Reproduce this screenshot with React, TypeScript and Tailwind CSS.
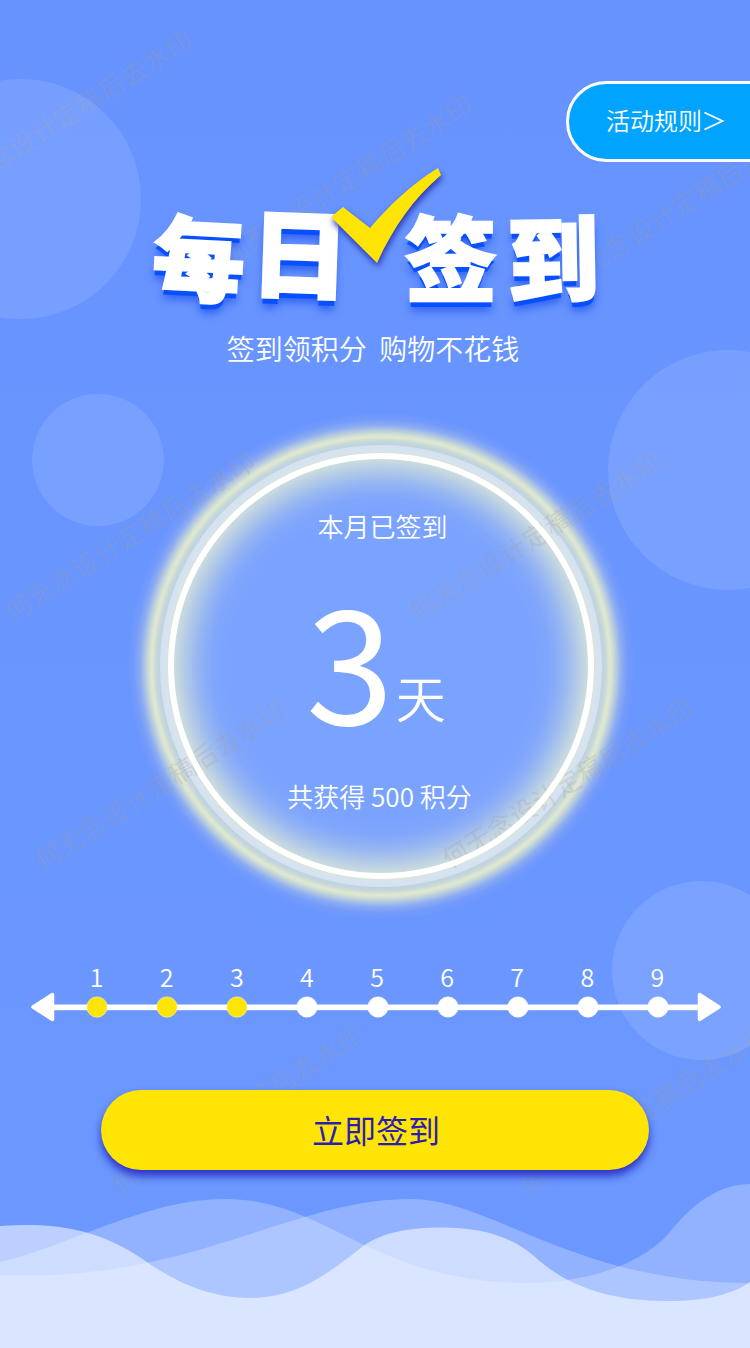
import React from 'react';

const DAYS = [
  { day: 1, x: 97 },
  { day: 2, x: 167 },
  { day: 3, x: 237 },
  { day: 4, x: 307 },
  { day: 5, x: 378 },
  { day: 6, x: 448 },
  { day: 7, x: 518 },
  { day: 8, x: 588 },
  { day: 9, x: 658 },
];
const SIGNED_DAYS = 3;

const BUBBLES = [
  'left-[-99px] top-[79px] size-[240px]',
  'left-[32px] top-[394px] size-[132px]',
  'left-[608px] top-[350px] size-[240px]',
  'left-[612px] top-[881px] size-[179px]',
];

// centre of the first character of every mark
const MARKS = [
  [-46, 185],
  [234, 250],
  [572, 273],
  [17, 606],
  [423, 606],
  [47, 855],
  [455, 853],
  [125, 1180],
  [532, 1180],
];

const TITLE = [
  { char: '每', className: 'w-[92px] rotate-3' },
  { char: '日', className: 'ml-[9px] w-[92px] -translate-y-[5px] rotate-2 scale-x-108 scale-y-104' },
  { char: '签', className: 'ml-[59px] w-[92px]' },
  { char: '到', className: 'ml-[10px] w-[92px] rotate-[-1deg]' },
];

const Watermarks: React.FC = () => (
  <div className="absolute inset-0 overflow-hidden">
    {MARKS.map(([x, y]) => (
      <span
        key={`${x}-${y}`}
        className="absolute h-[26px] origin-[13px_13px] rotate-[-32.4deg] whitespace-nowrap text-[26px] leading-[26px] tracking-[0.5px] text-[#a69c90]/25"
        style={{ left: x - 13, top: y - 13 }}
      >
        何无念设计定稿后去水印
      </span>
    ))}
  </div>
);

const Waves: React.FC = () => (
  <svg className="absolute bottom-0 left-0" width="750" height="168" viewBox="0 1180 750 168" fill="#fff">
    <path
      fillOpacity="0.26"
      d="M0 1262 C70 1246 145 1199 225 1199 C292 1199 332 1234 397 1259 C440 1276 485 1283 527 1283 C585 1283 642 1265 670 1232 C697 1198 724 1184 750 1184 V1348 H0Z"
    />
    <path
      fillOpacity="0.26"
      d="M0 1275 C190 1283 290 1199 411 1199 C491 1199 575 1283 750 1283 V1348 H0Z"
    />
    <path
      fillOpacity="0.55"
      d="M0 1226 C58 1222 102 1229 151 1265 C183 1286 215 1298 250 1298 C298 1298 330 1272 362 1247 C382 1232 410 1227.500 441 1227.500 C480 1227.500 512 1236 535 1257 C565 1284 605 1301 668 1301 C707 1301 733 1294 750 1282 V1348 H0Z"
    />
  </svg>
);

const Title: React.FC = () => (
  <h1 className="relative mt-[38px] ml-[153px] flex h-[108px] text-[92px] leading-[108px] font-black text-white [-webkit-text-stroke:2.500px_#fff] [text-shadow:0_6px_0_#0850ff,0_10px_8px_#2f62f0]">
    {TITLE.map(({ char, className }) => (
      <span key={char} className={className}>
        {char}
      </span>
    ))}
    <svg
      className="absolute left-[173px] top-[-37px] overflow-visible drop-shadow-[1px_4px_3px_#2b35b4]"
      width="120"
      height="104"
      viewBox="326 163 120 104"
    >
      <path fill="#ffe506" d="M331 217 L343 207 L370 228 C389 206 410 185 438 168 L441 175 C413 199 393 228 377 263Z" />
    </svg>
  </h1>
);

const Dial: React.FC = () => (
  <section className="ml-[168px] mt-[84px] size-[426px] rounded-full border-[6px] border-white text-white">
    <p className="mt-[48px] h-[38px] pl-[3px] text-center text-[26px] leading-[38px] font-[350]">本月已签到</p>
    <p className="mt-[20px] flex h-[190px] pl-[132px]">
      <span className="mt-[-3px] text-[158px] leading-[190px]">3</span>
      <span className="mt-[101px] ml-[2px] h-[60px] text-[50px] leading-[60px] font-[350]">天</span>
    </p>
    <p className="mt-[22px] pr-[3px] text-center text-[26px] leading-[38px] font-[350]">共获得 500 积分</p>
  </section>
);

const Timeline: React.FC = () => (
  <section className="mt-[78px] h-[64px] text-white">
    <ol className="flex pl-[61.500px]">
      {DAYS.map(({ day }) => (
        <li key={day} className="flex h-[35px] w-[70.120px] flex-col items-center text-[25px] leading-[38px] font-[350]">
          {day}
        </li>
      ))}
    </ol>
    <svg className="block" width="750" height="30" viewBox="0 992 750 30">
      <rect x="50" y="1004.500" width="652" height="5.700" fill="#fff" />
      <path
        d="M33 1007 L52.500 994.500 V1019.500Z M719 1007 L699.500 994.500 V1019.500Z"
        fill="#fff"
        stroke="#fff"
        strokeWidth="3.500"
        strokeLinejoin="round"
      />
      {DAYS.map(({ day, x }) => (
        <circle
          key={day}
          cx={x}
          cy="1007"
          r="10.300"
          fill={day <= SIGNED_DAYS ? '#ffe506' : '#fff'}
          stroke="#fff"
          strokeOpacity="0.5"
          strokeWidth="0.8"
        />
      ))}
    </svg>
  </section>
);

export default function App() {
  return (
    <main className="relative h-[1348px] w-[750px] overflow-hidden bg-linear-to-b from-[#6693ff] to-[#6c98ff] font-['Noto_Sans_CJK_SC',sans-serif]">
      <div className="absolute left-[121px] top-[406px] size-[520px] bg-[radial-gradient(circle_at_center,#7aa2ff_0,#7aa2ff_150px,#80a6fc_168px,#93b3f3_182px,#b2cae7_196px,#ccdcde_207px,#d8e5d6_213.500px,#d7e3f0_215px,#d4e1ef_220.500px,#bfd2df_221.500px,#c7d8da_225px,#dfe8cf_229px,#d8e3d1_231px,#b2c8e1_236px,#8babf2_241px,#749bfb_247px,#6893ff00_254px)]" />
      <Watermarks />
      {BUBBLES.map((position) => (
        <div key={position} className={`absolute rounded-full bg-white/11 ${position}`} />
      ))}
      <Waves />

      <div className="relative flex flex-col pt-[81px]">
        <button className="mr-[-3px] flex h-[81px] w-[187px] items-center self-end rounded-l-full border-[3px] border-white bg-[#00a4ff] pb-[3px] pl-[37px] text-[24px] font-[350] whitespace-nowrap text-white">
          活动规则
          <svg className="mt-px ml-[2px] shrink-0" width="22" height="22" viewBox="0 0 22 22" fill="none" stroke="#fff" strokeWidth="1.800">
            <path d="M0.500 2.500 L18.500 11 L0.500 19.500" />
          </svg>
        </button>
        <Title />
        <p className="mt-[19px] pr-[4px] text-center text-[28px] leading-[42px] font-[350] whitespace-pre text-white">签到领积分  购物不花钱</p>
        <Dial />
        <Timeline />
        <button className="mx-auto mt-[69px] h-[80px] w-[548px] rounded-full bg-[#ffe506] pb-[2px] pl-[2px] text-[32px] text-[#2c1fae] shadow-[0_6px_8px_#2b32c5]">
          立即签到
        </button>
      </div>
    </main>
  );
}
